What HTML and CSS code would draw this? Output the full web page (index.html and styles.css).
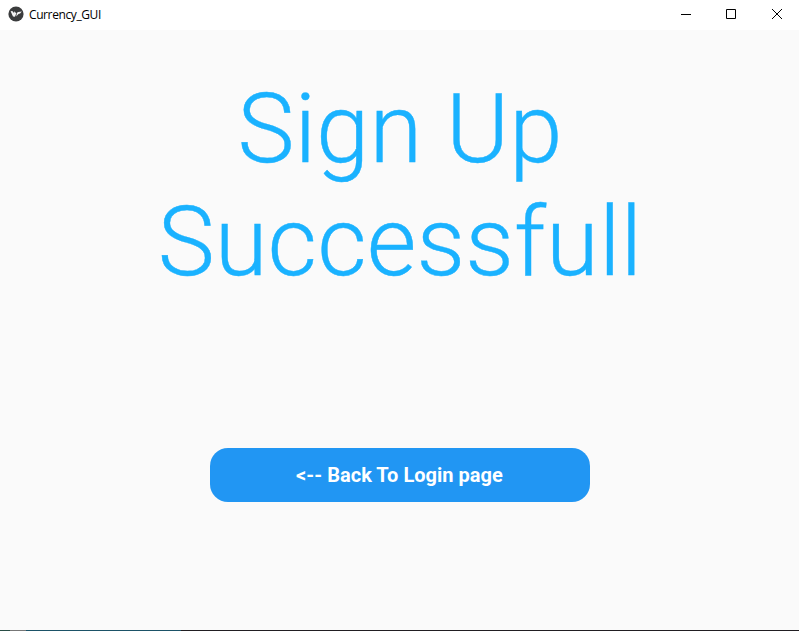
FILE: index.html
```html
<!DOCTYPE html>
<html lang="en">
<head>
<meta charset="utf-8">
<title>Currency_GUI</title>
<link rel="stylesheet" href="styles.css">
</head>
<body>
<header class="titlebar">
  <svg class="app-icon" width="16" height="16" viewBox="0 0 16 16"><circle cx="8" cy="8" r="7.6" fill="#3b3c3d"/><path d="M2.6 5.3 4.3 5 6.2 7.2 6 5.2 8.3 7.2 7 10.8 5 10.4Z M8.2 10.5 9 6.8 10.3 5.9 13.8 5.6 12.1 7.4 10.5 8Z" fill="#f4f4f4"/></svg>
  <span class="title">Currency_GUI</span>
  <div class="controls">
    <svg width="45" height="30" viewBox="0 0 45 30"><path d="M18 14.5h10" stroke="#000" fill="none"/></svg>
    <svg width="45" height="30" viewBox="0 0 45 30"><path d="M18.5 9.5h9v9h-9z" stroke="#000" fill="none"/></svg>
    <svg width="46" height="30" viewBox="0 0 46 30"><path d="m19 9 10 10m0-10-10 10" stroke="#000" fill="none"/></svg>
  </div>
</header>
<main class="screen">
  <h1 class="heading"><span>Sign Up</span><span>Successfull</span></h1>
  <button class="back" type="button">&lt;-- Back To Login page</button>
</main>
<footer class="edge"></footer>
</body>
</html>
```

FILE: styles.css
```css
body { margin: 0; height: 631px; display: flex; flex-direction: column; background: #fafafa; font-family: Roboto, sans-serif; overflow: hidden; }
.titlebar { height: 30px; display: flex; align-items: center; background: #fff; flex: none; }
.app-icon { margin: 0 5px 2px 8px; }
.title { font: 12px "Open Sans", sans-serif; letter-spacing: -0.4px; margin-bottom: 2px; color: #000; }
.controls { display: flex; margin-left: auto; }
.screen { flex: 1; display: flex; flex-direction: column; align-items: center; }
.heading { margin: 43px 0 0; padding-left: 1px; display: flex; flex-direction: column; align-items: center; font-size: 96px; line-height: 113px; font-weight: 300; letter-spacing: 0.12px; color: #1ab2ff; -webkit-text-stroke: 0.4px #1ab2ff; }
.back { margin-top: 149px; width: 380px; height: 54px; padding: 0; border: 0; border-radius: 18px; background: #2196f3; color: #fff; font: 700 20px Roboto, sans-serif; letter-spacing: 0.03px; }
.edge { height: 1px; flex: none; background: linear-gradient(90deg, #294d45 0 10px, #777 10px 26px, #1b5267 26px 181px, #211e22 181px); }
```
